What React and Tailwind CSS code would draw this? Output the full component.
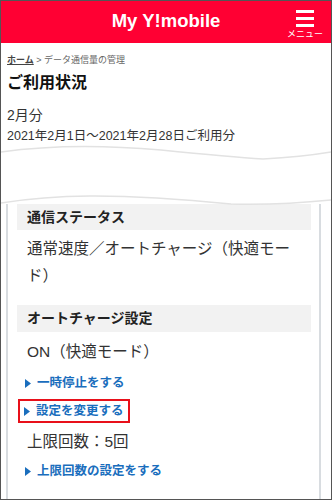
import React from "react";

const Triangle = () => (
  <svg width="6" height="9" viewBox="0 0 6 9" className="shrink-0">
    <path d="M0 0 L6 4.5 L0 9 Z" fill="#1a6ebd" />
  </svg>
);

const LinkRow = ({ label }) => (
  <div className="flex items-center gap-[6px] pl-[8px] leading-[18px] text-[12.5px] font-bold text-[#1a6ebd]">
    <Triangle />
    <span>{label}</span>
  </div>
);

const SectionHead = ({ children, className = "" }) => (
  <div
    className={`bg-[#f2f2f2] pl-[10px] text-[14px] font-bold text-[#222] flex items-center ${className}`}
  >
    {children}
  </div>
);

export default function App() {
  return (
    <div className="w-[332px] h-[500px] overflow-hidden border border-[#555] bg-white font-['Liberation_Sans','Noto_Sans_CJK_JP',sans-serif] text-[#333]">
      {/* header */}
      <div className="h-[42px] bg-[#ff0033] grid grid-cols-[1fr_auto_1fr] text-white">
        <div />
        <div className="flex items-center pb-[3px] text-[18.5px] font-bold">
          My Y!mobile
        </div>
        <div className="flex justify-end pr-[8px]">
          <div className="flex flex-col items-center pt-[9px]">
            <div className="flex flex-col gap-[4px]">
              <div className="h-[3px] w-[18px] bg-white" />
              <div className="h-[3px] w-[18px] bg-white" />
              <div className="h-[3px] w-[18px] bg-white" />
            </div>
            <div className="mt-[2px] text-[9px] leading-[10px] font-['Noto_Sans_CJK_JP',sans-serif]">
              メニュー
            </div>
          </div>
        </div>
      </div>

      {/* top of page */}
      <div className="px-[6px]">
        <div className="pt-[11px] text-[9px] leading-[12px] text-[#666]">
          <span className="underline text-[#444] font-bold">ホーム</span>
          <span> &gt; データ通信量の管理</span>
        </div>
        <h1 className="mt-[6px] text-[16px] leading-[22px] font-bold text-[#111]">
          ご利用状況
        </h1>
        <p className="mt-[11px] text-[14px] leading-[20px]">2月分</p>
        <p className="mt-[4px] text-[12.5px] leading-[14px]">
          2021年2月1日〜2021年2月28日ご利用分
        </p>
      </div>

      {/* torn edge */}
      <svg width="330" height="61" viewBox="0 0 330 61" className="block overflow-visible">
        <path
          d="M0 9 Q 70 -1 160 7 Q 230 14 262 16 Q 300 14 330 9"
          fill="none"
          stroke="#e2e2e2"
          strokeWidth="1.5"
        />
        <path
          d="M0 60 C 50 52, 110 49, 230 61 C 270 62, 300 60, 330 57"
          fill="none"
          stroke="#e2e2e2"
          strokeWidth="1.5"
        />
      </svg>

      {/* card */}
      <div className="ml-[5px] w-[315px] h-[400px] border-x-2 border-[#d8dce0] pl-[9px] pr-[8px]">
        <SectionHead className="h-[26px]">通信ステータス</SectionHead>
        <p className="mt-[5px] pl-[10px] w-[280px] text-[15.5px] leading-[27px]">
          通常速度／オートチャージ（快適モード）
        </p>
        <SectionHead className="mt-[16px] h-[27px]">オートチャージ設定</SectionHead>
        <p className="mt-[8px] pl-[10px] text-[15.5px] leading-[24px]">
          ON（快適モード）
        </p>
        <div className="mt-[10px]">
          <LinkRow label="一時停止をする" />
        </div>
        <div className="mt-[7px] ml-[1px] w-[112px] h-[24px] border-2 border-[#e8101a] flex items-center">
          <div className="-ml-[4px]">
            <LinkRow label="設定を変更する" />
          </div>
        </div>
        <p className="mt-[7px] pl-[10px] text-[15.5px] leading-[24px]">
          上限回数：5回
        </p>
        <div className="mt-[8px]">
          <LinkRow label="上限回数の設定をする" />
        </div>
      </div>
    </div>
  );
}
